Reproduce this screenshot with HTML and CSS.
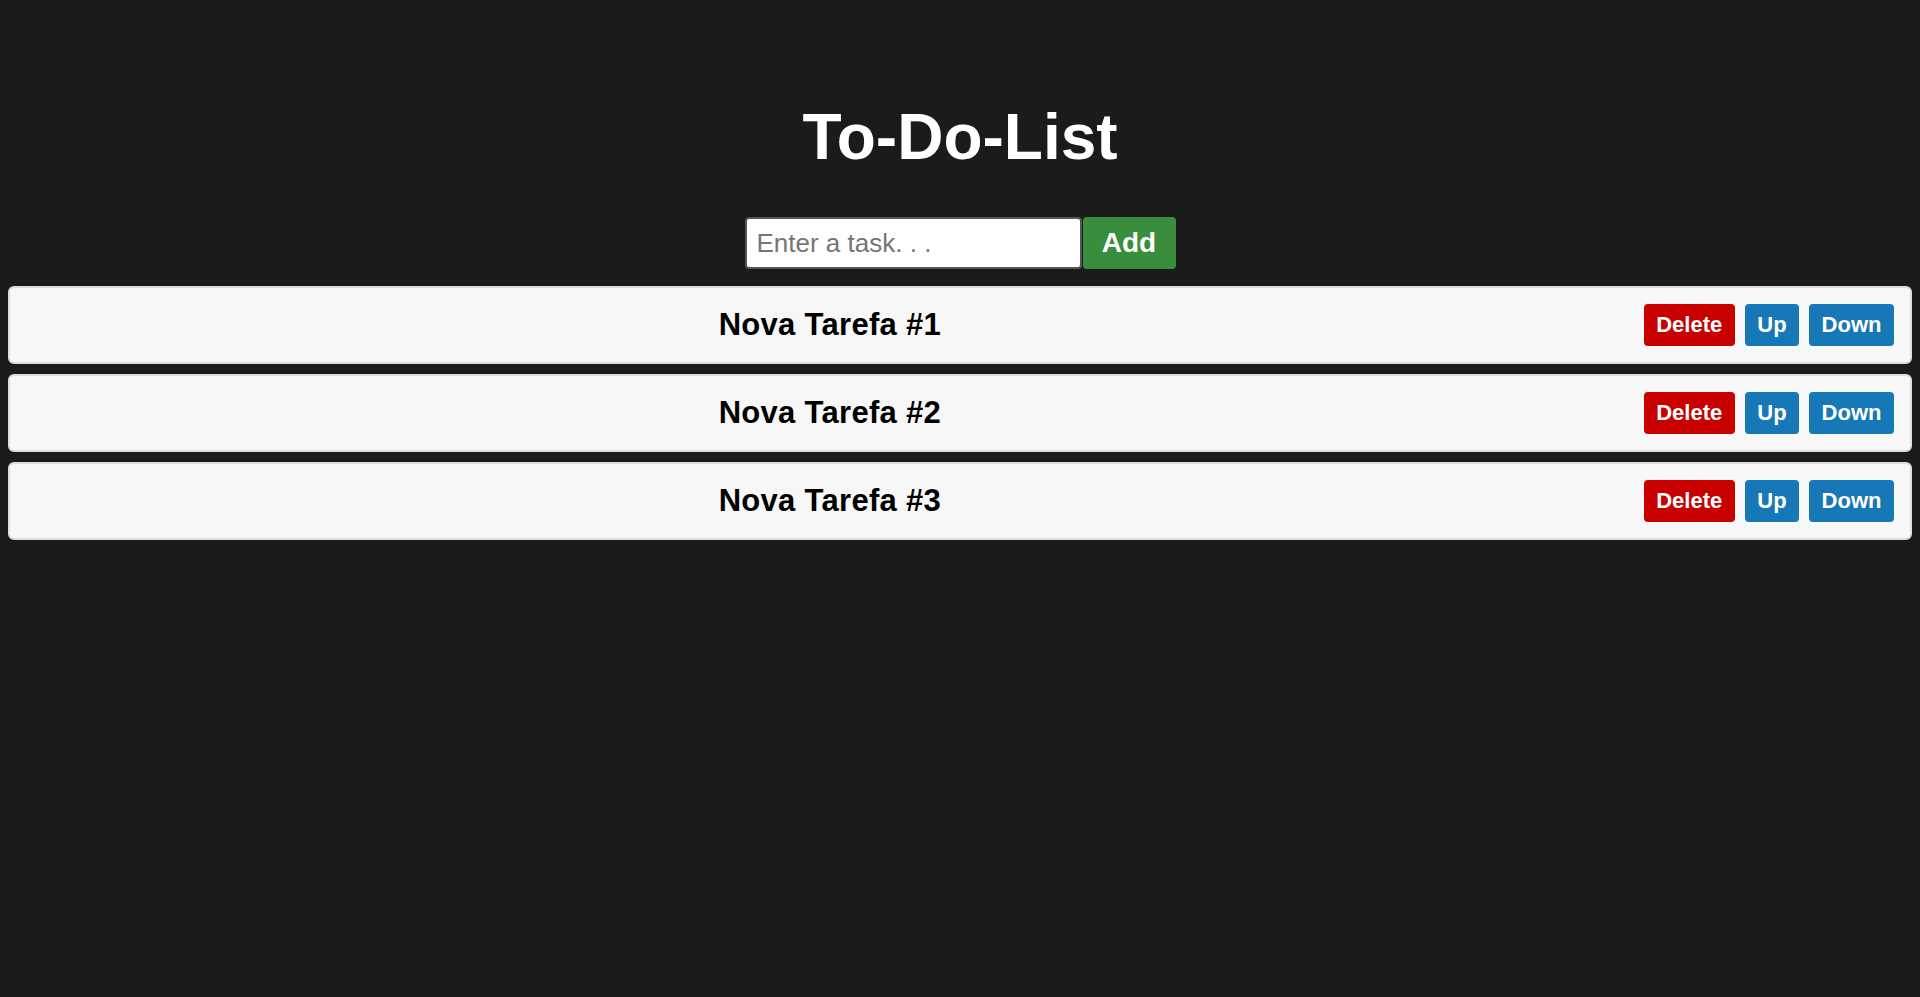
FILE: index.html
```html
<!DOCTYPE html>
<html lang="en">
<head>
<meta charset="utf-8">
<title>To-Do-List</title>
<link rel="stylesheet" href="styles.css">
</head>
<body>
<div class="app">
  <h1 class="title">To-Do-List</h1>
  <div class="add-bar">
    <input class="task-input" type="text" placeholder="Enter a task. . .">
    <button class="add-btn">Add</button>
  </div>
  <ol class="task-list">
    <li class="task">
      <span class="task-text">Nova Tarefa #1</span>
      <div class="actions">
        <button class="btn btn-delete">Delete</button>
        <button class="btn btn-move">Up</button>
        <button class="btn btn-move">Down</button>
      </div>
    </li>
    <li class="task">
      <span class="task-text">Nova Tarefa #2</span>
      <div class="actions">
        <button class="btn btn-delete">Delete</button>
        <button class="btn btn-move">Up</button>
        <button class="btn btn-move">Down</button>
      </div>
    </li>
    <li class="task">
      <span class="task-text">Nova Tarefa #3</span>
      <div class="actions">
        <button class="btn btn-delete">Delete</button>
        <button class="btn btn-move">Up</button>
        <button class="btn btn-move">Down</button>
      </div>
    </li>
  </ol>
</div>
</body>
</html>
```
FILE: styles.css
```css
html, body {
  background: #1b1b1b;
}
body {
  margin: 8px;
  font-family: "Liberation Sans", Arial, sans-serif;
  color: #ffffff;
}
.app {
  padding-top: 92px;
  display: flex;
  flex-direction: column;
}
.title {
  margin: 0;
  font-size: 64px;
  line-height: 74px;
  font-weight: bold;
  text-align: center;
  color: #ffffff;
}
.add-bar {
  display: flex;
  justify-content: center;
  gap: 1px;
  margin-top: 43px;
}
.task-input {
  box-sizing: border-box;
  width: 337px;
  height: 52px;
  border: 2px solid #555555;
  border-radius: 4px;
  padding: 0 10px;
  font-family: "Liberation Sans", Arial, sans-serif;
  font-size: 26px;
  color: #222;
  background: #ffffff;
  outline: none;
}
.task-input::placeholder {
  color: #757575;
}
.add-btn {
  box-sizing: border-box;
  width: 93px;
  height: 52px;
  border: none;
  border-radius: 4px;
  background: #388e3c;
  color: #ffffff;
  font-family: "Liberation Sans", Arial, sans-serif;
  font-size: 28px;
  font-weight: bold;
  padding: 0;
}
.task-list {
  list-style: none;
  margin: 17px 0 0;
  padding: 0;
  display: flex;
  flex-direction: column;
  gap: 10px;
}
.task {
  box-sizing: border-box;
  height: 78px;
  display: flex;
  align-items: center;
  padding: 0 16px;
  background: #f7f7f7;
  border: 2px solid #dddddd;
  border-radius: 6px;
}
.task-text {
  flex: 1;
  text-align: center;
  margin-right: 10px;
  font-size: 31px;
  font-weight: bold;
  letter-spacing: 0.3px;
  color: #000000;
}
.actions {
  display: flex;
  gap: 10px;
}
.btn {
  height: 42px;
  padding: 0 12.5px;
  border: none;
  border-radius: 4px;
  color: #ffffff;
  font-family: "Liberation Sans", Arial, sans-serif;
  font-size: 22px;
  font-weight: bold;
}
.btn-delete {
  background: #c80000;
}
.btn-move {
  background: #1778b8;
}
```
